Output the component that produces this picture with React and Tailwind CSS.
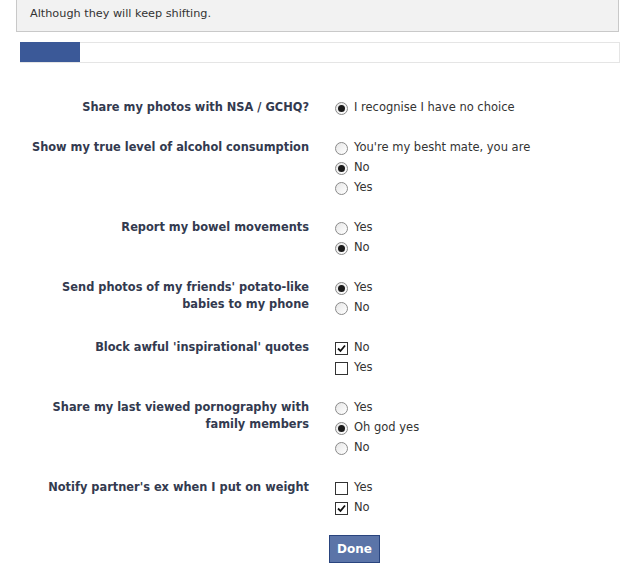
import React from 'react';

const rows = [
  { label: ['Share my photos with NSA / GCHQ?'], type: 'radio', options: [['I recognise I have no choice', true]] },
  {
    label: ['Show my true level of alcohol consumption'],
    type: 'radio',
    options: [["You're my besht mate, you are", false], ['No', true], ['Yes', false]],
  },
  { label: ['Report my bowel movements'], type: 'radio', options: [['Yes', false], ['No', true]] },
  {
    label: ["Send photos of my friends' potato-like", 'babies to my phone'],
    type: 'radio',
    options: [['Yes', true], ['No', false]],
  },
  { label: ["Block awful 'inspirational' quotes"], type: 'check', options: [['No', true], ['Yes', false]] },
  {
    label: ['Share my last viewed pornography with', 'family members'],
    type: 'radio',
    options: [['Yes', false], ['Oh god yes', true], ['No', false]],
  },
  { label: ["Notify partner's ex when I put on weight"], type: 'check', options: [['Yes', false], ['No', true]] },
];

function Radio({ checked }) {
  return (
    <span className="w-[13px] h-[13px] rounded-full border border-[#8a8a8a] bg-gradient-to-br from-[#e6e6e6] to-white flex items-center justify-center shrink-0">
      {checked && <span className="w-[7px] h-[7px] rounded-full bg-[#1a1a1a]" />}
    </span>
  );
}

function Check({ checked }) {
  return (
    <span className="w-[13px] h-[13px] border border-[#333] bg-white flex items-center justify-center shrink-0">
      {checked && (
        <svg width="9" height="9" viewBox="0 0 9 9">
          <path d="M1 4.5 L3.5 7 L8 1.5" fill="none" stroke="#111" strokeWidth="1.8" />
        </svg>
      )}
    </span>
  );
}

export default function App() {
  return (
    <div className="bg-white w-[639px] h-[581px] overflow-hidden text-[11.5px] text-[#333] font-['Tahoma','DejaVu_Sans',sans-serif]">
      <div className="ml-[16px] w-[603px] h-[33px] -mt-px bg-[#f2f2f2] border border-[#c9c9c9] flex items-end pb-[8px] pl-[13px] text-[11.25px]">
        Although they will keep shifting.
      </div>

      <div className="ml-[20px] mt-[10px] w-[600px] h-[21px] border border-[#e5e5e5] bg-white">
        <div className="w-[60px] h-[20px] -mt-px -ml-px bg-[#3b5998]" />
      </div>

      <div className="mt-[35px] grid grid-cols-[280px_1fr] gap-x-[26px] ml-[29px]">
        {rows.map((row, i) => (
          <React.Fragment key={i}>
            <div className="text-right font-bold text-[11.4px] text-[#333a4f] leading-[17px] pt-[1px] pb-[20px] whitespace-nowrap">
              {row.label.map((l, j) => (
                <div key={j}>{l}</div>
              ))}
            </div>
            <div className="pb-[20px]">
              {row.options.map(([text, checked], j) => (
                <div key={j} className="h-[20px] flex items-center gap-[6px]">
                  {row.type === 'radio' ? <Radio checked={checked} /> : <Check checked={checked} />}
                  <span>{text}</span>
                </div>
              ))}
            </div>
          </React.Fragment>
        ))}
      </div>

      <div className="ml-[329px] mt-[-3px]">
        <button className="w-[51px] h-[28px] bg-[#5b74a8] border border-[#29447e] text-white font-bold text-[12px]">
          Done
        </button>
      </div>
    </div>
  );
}
